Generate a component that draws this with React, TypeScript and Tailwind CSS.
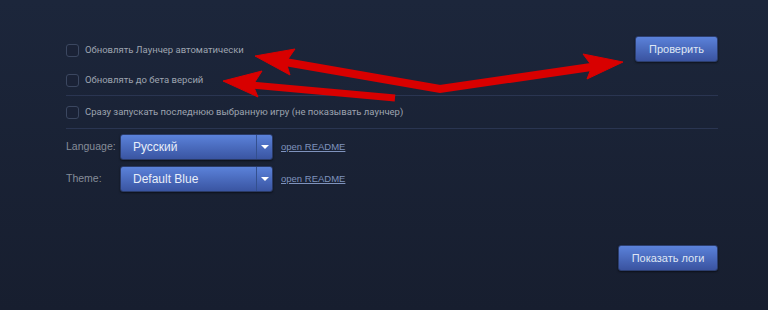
import React from "react";

function Check({ label }: { label: string }) {
  return (
    <div className="flex items-center gap-[6px]">
      <div className="w-[13px] h-[13px] rounded-[3px] border border-[#3b4760] bg-[#1a2236]" />
      <span className="text-[9.5px] text-[#9ea4b0]" style={{ fontFamily: "Roboto, 'Noto Sans', sans-serif" }}>
        {label}
      </span>
    </div>
  );
}

function Select({ value }: { value: string }) {
  return (
    <div className="w-[153px] h-[26px] flex rounded-[3px] border border-[#2a3a66] bg-gradient-to-b from-[#5b82da] to-[#3a55a2] shadow-[0_1px_2px_rgba(0,0,0,0.5)]">
      <div className="flex-1 flex items-center pl-[12px] text-[12px] text-[#e8eef9]">{value}</div>
      <div className="w-[16px] border-l border-[#34508f] flex items-center justify-center">
        <div className="w-0 h-0 border-l-[4px] border-r-[4px] border-t-[4px] border-l-transparent border-r-transparent border-t-white" />
      </div>
    </div>
  );
}

function Btn({ label, w }: { label: string; w: string }) {
  return (
    <div
      className={`${w} h-[26px] flex items-center justify-center rounded-[3px] border border-[#2c3e6e] bg-gradient-to-b from-[#5b82da] to-[#3a53a0] text-[11px] text-[#dfe6f4] shadow-[0_1px_2px_rgba(0,0,0,0.5)]`}
    >
      {label}
    </div>
  );
}

export default function App() {
  return (
    <div
      className="relative w-[768px] h-[310px] overflow-hidden bg-gradient-to-b from-[#1c263b] to-[#171e2f]"
      style={{ fontFamily: "'Liberation Sans', Arial, sans-serif" }}
    >
      <div className="pl-[66px] pr-[50px] pt-[36px]">
        <div className="flex justify-between">
          <div className="flex flex-col">
            <div className="h-[29px] flex items-center">
              <Check label="Обновлять Лаунчер автоматически" />
            </div>
            <div className="h-[30px] flex items-center">
              <Check label="Обновлять до бета версий" />
            </div>
          </div>
          <Btn label="Проверить" w="w-[83px]" />
        </div>
        <div className="h-[1px] bg-[#2a3551]" />
        <div className="h-[32px] flex items-center">
          <Check label="Сразу запускать последнюю выбранную игру (не показывать лаунчер)" />
        </div>
        <div className="h-[1px] bg-[#2a3551]" />
        <div className="flex flex-col gap-[6px] pt-[5px]">
          <div className="flex items-center">
            <div className="w-[54px] text-[10.5px] text-[#868d99]">Language:</div>
            <Select value="Русский" />
            <a className="ml-[8px] text-[9.5px] text-[#7f93bd] underline">open README</a>
          </div>
          <div className="flex items-center">
            <div className="w-[54px] text-[10.5px] text-[#868d99]">Theme:</div>
            <Select value="Default Blue" />
            <a className="ml-[8px] text-[9.5px] text-[#7f93bd] underline">open README</a>
          </div>
        </div>
        <div className="flex justify-end pt-[53px]">
          <Btn label="Показать логи" w="w-[100px]" />
        </div>
      </div>

      <svg className="absolute left-0 top-0 pointer-events-none" width="768" height="310" viewBox="0 0 768 310">
        <g fill="#d80000" stroke="#d80000" strokeLinejoin="miter">
          <polyline points="285,62 440,89 598,66" fill="none" strokeWidth="8" />
          <polygon points="255,56 295,49 286,62 290,75" strokeWidth="1" />
          <polygon points="623,62 583,54 592,66 587,79" strokeWidth="1" />
          <line x1="395" y1="98" x2="252" y2="85" strokeWidth="7" />
          <polygon points="223,81 262,71 253,85 258,97" strokeWidth="1" />
        </g>
      </svg>
    </div>
  );
}
